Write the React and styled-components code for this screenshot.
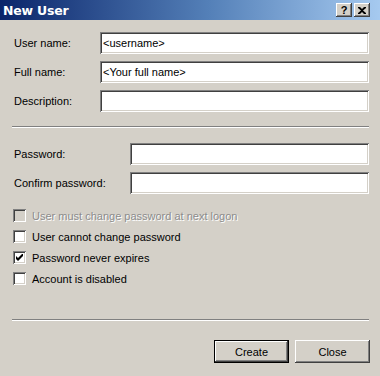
import React from "react";
import styled, { createGlobalStyle } from "styled-components";

const GlobalStyle = createGlobalStyle`
  html, body {
    margin: 0;
    padding: 0;
    background: #d4d0c8;
  }
  body {
    font-family: "Liberation Sans", Arial, sans-serif;
    font-size: 11px;
    color: #000;
  }
`;

const sunken = `
  box-shadow: inset 1px 1px #808080, inset -1px -1px #ffffff,
    inset 2px 2px #404040, inset -2px -2px #d4d0c8;
`;

const raised = `
  box-shadow: inset -1px -1px #404040, inset 1px 1px #ffffff,
    inset -2px -2px #808080, inset 2px 2px #d4d0c8;
`;

const Window = styled.div`
  width: 380px;
  height: 376px;
  background: #d4d0c8;
  display: flex;
  flex-direction: column;
  overflow: hidden;
`;

const TitleBar = styled.div`
  height: 20px;
  flex: none;
  display: flex;
  align-items: center;
  padding: 0 10px 0 3px;
  background: linear-gradient(to right, #0a246a 0%, #5480b8 55%, #a6caf0 100%);
`;

const Title = styled.div`
  flex: 1;
  color: #fff;
  font-family: Tahoma, "DejaVu Sans", "Liberation Sans", sans-serif;
  font-weight: bold;
  font-size: 12.5px;
  letter-spacing: -0.2px;
`;

const CaptionButton = styled.button`
  width: 16px;
  height: 14px;
  margin-left: ${(p) => (p.$gap ? "2px" : "0")};
  padding: 0;
  border: none;
  background: #d4d0c8;
  ${raised}
  display: flex;
  align-items: center;
  justify-content: center;
  font-family: "Liberation Sans", Arial, sans-serif;
  font-weight: bold;
  font-size: 11px;
  line-height: 1;
  color: #000;
`;

const Body = styled.div`
  flex: 1;
  display: flex;
  flex-direction: column;
  padding: 12px 11px 0 12px;
`;

const FieldGrid = styled.div`
  display: grid;
  grid-template-columns: ${(p) => p.$labelWidth}px 1fr;
  row-gap: 7px;
  align-items: center;
`;

const Label = styled.label`
  padding-left: 2px;
  white-space: nowrap;
`;

const TextBox = styled.input`
  box-sizing: border-box;
  width: 100%;
  height: 22px;
  border: none;
  outline: none;
  margin: 0;
  padding: 0 3px;
  background: #fff;
  font-family: "Liberation Sans", Arial, sans-serif;
  font-size: 11px;
  color: #000;
  ${sunken}
`;

const Separator = styled.div`
  height: 2px;
  flex: none;
  border-top: 1px solid #808080;
  border-bottom: 1px solid #ffffff;
  box-sizing: border-box;
  margin: ${(p) => p.$margin};
`;

const CheckList = styled.div`
  display: flex;
  flex-direction: column;
  gap: 8px;
  padding-left: 1px;
`;

const CheckRow = styled.div`
  display: flex;
  align-items: center;
  gap: 6px;
  height: 13px;
  color: ${(p) => (p.$disabled ? "#8c8c8c" : "#000")};
  text-shadow: ${(p) => (p.$disabled ? "1px 1px 0 #ffffff" : "none")};
`;

const Box = styled.span`
  width: 13px;
  height: 13px;
  flex: none;
  box-sizing: border-box;
  background: ${(p) => (p.$disabled ? "#d4d0c8" : "#fff")};
  ${sunken}
  display: flex;
  align-items: center;
  justify-content: center;
`;

const Spacer = styled.div`
  flex: none;
  height: ${(p) => p.$h}px;
`;

const ButtonRow = styled.div`
  display: flex;
  justify-content: flex-end;
  gap: 6px;
  margin-right: -1px;
`;

const PushButton = styled.button`
  width: 75px;
  height: 23px;
  padding: 0;
  border: ${(p) => (p.$default ? "1px solid #000" : "none")};
  box-sizing: border-box;
  background: #d4d0c8;
  ${raised}
  font-family: "Liberation Sans", Arial, sans-serif;
  font-size: 11px;
  color: #000;
`;

const CheckMark = () => (
  <svg width="7" height="7" viewBox="0 0 7 7">
    <path d="M0 2v3l2 2 5-5V-1L2 4z" fill="#000" />
  </svg>
);

const CloseGlyph = () => (
  <svg width="8" height="7" viewBox="0 0 8 7">
    <path
      d="M0 0h2l2 2 2-2h2v1L5 3.5 8 6v1H6L4 5 2 7H0V6l3-2.5L0 1z"
      fill="#000"
    />
  </svg>
);

const options = [
  { label: "User must change password at next logon", disabled: true },
  { label: "User cannot change password" },
  { label: "Password never expires", checked: true },
  { label: "Account is disabled" },
];

export default function App() {
  return (
    <Window>
      <GlobalStyle />
      <TitleBar>
        <Title>New User</Title>
        <CaptionButton>?</CaptionButton>
        <CaptionButton $gap>
          <CloseGlyph />
        </CaptionButton>
      </TitleBar>
      <Body>
        <FieldGrid $labelWidth={88}>
          <Label>User name:</Label>
          <TextBox defaultValue="<username>" />
          <Label>Full name:</Label>
          <TextBox defaultValue="<Your full name>" />
          <Label>Description:</Label>
          <TextBox defaultValue="" />
        </FieldGrid>
        <Separator $margin="14px 0 15px 0" />
        <FieldGrid $labelWidth={118}>
          <Label>Password:</Label>
          <TextBox type="password" />
          <Label>Confirm password:</Label>
          <TextBox type="password" />
        </FieldGrid>
        <Spacer $h={15} />
        <CheckList>
          {options.map((o) => (
            <CheckRow key={o.label} $disabled={o.disabled}>
              <Box $disabled={o.disabled}>{o.checked ? <CheckMark /> : null}</Box>
              <span>{o.label}</span>
            </CheckRow>
          ))}
        </CheckList>
        <Spacer $h={34} />
        <Separator $margin="0" />
        <Spacer $h={19} />
        <ButtonRow>
          <PushButton $default>Create</PushButton>
          <PushButton>Close</PushButton>
        </ButtonRow>
      </Body>
    </Window>
  );
}
